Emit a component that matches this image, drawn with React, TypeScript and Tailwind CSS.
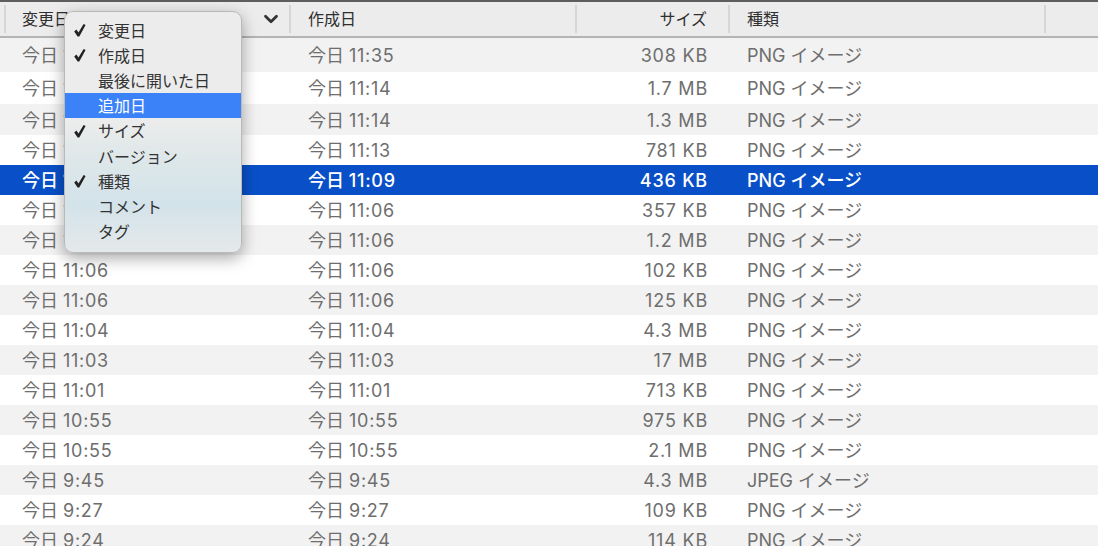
import { ChevronDown } from "lucide-react";

const font = "font-['Inter','Noto_Sans_CJK_JP',sans-serif]";

const rows = [
  ["11:35", "308 KB"],
  ["11:14", "1.7 MB"],
  ["11:14", "1.3 MB"],
  ["11:13", "781 KB"],
  ["11:09", "436 KB"],
  ["11:06", "357 KB"],
  ["11:06", "1.2 MB"],
  ["11:06", "102 KB"],
  ["11:06", "125 KB"],
  ["11:04", "4.3 MB"],
  ["11:03", "17 MB"],
  ["11:01", "713 KB"],
  ["10:55", "975 KB"],
  ["10:55", "2.1 MB"],
  ["9:45", "4.3 MB"],
  ["9:27", "109 KB"],
  ["9:24", "114 KB"],
].map(([time, size], i) => ({
  time,
  size,
  kind: i === 14 ? "JPEG イメージ" : "PNG イメージ",
}));

// the first few rows in the source are slightly taller than the rest
const rowHeights = ["h-[34px]", "h-[32px]", "h-[31px]", "h-[30px]"];

const menuItems = [
  { label: "変更日", checked: true },
  { label: "作成日", checked: true },
  { label: "最後に開いた日" },
  { label: "追加日", active: true },
  { label: "サイズ", checked: true },
  { label: "バージョン" },
  { label: "種類", checked: true },
  { label: "コメント" },
  { label: "タグ" },
];

function CheckMark() {
  return (
    <svg width="12" height="13" viewBox="0 0 12 13" className="text-[#222]">
      <path d="M0.2 7.6 L2.4 5.6 L4.5 8.4 L9.6 0 L11.6 0.9 L5.3 12.6 L3.6 12.6 Z" fill="currentColor" />
    </svg>
  );
}

function HeaderCell({ className, children }: { className: string; children?: React.ReactNode }) {
  return (
    <div className={`flex h-[28px] items-center border-r-2 border-[#d6d6d6] text-[16px] text-[#2f2f2f] ${className}`}>
      {children}
    </div>
  );
}

function ColumnMenu() {
  return (
    <div className="absolute left-[64px] top-[11px] w-[178px] overflow-hidden rounded-[9px] border border-[#b9b9b9] bg-[linear-gradient(180deg,#ececec_0%,#ececec_45%,#dde7e9_62%,#d3e3ea_80%,#e4e9ea_100%)] pt-[5.5px] pb-[7.5px] shadow-[0_5px_16px_rgba(0,0,0,0.35)]">
      {menuItems.map((item) => (
        <div
          key={item.label}
          className={`flex h-[25.2px] items-center pt-[1px] text-[16px] ${item.active ? "bg-[#3b82f9] text-white" : "text-[#333]"}`}
        >
          <span className="flex w-[33px] justify-end pr-[12px]">{item.checked && <CheckMark />}</span>
          {item.label}
        </div>
      ))}
    </div>
  );
}

export default function App() {
  return (
    <div className={`relative h-[546px] w-[1098px] overflow-hidden bg-white ${font}`}>
      <div className="flex h-[38px] items-center border-t-2 border-b-2 border-t-[#5e5e5e] border-b-[#b4b4b4] bg-[#ececec]">
        <HeaderCell className="ml-[4px] w-[287px] justify-between border-l-2 pl-[16px] pr-[7px]">
          変更日
          <ChevronDown size={22} strokeWidth={3} className="text-[#333]" />
        </HeaderCell>
        <HeaderCell className="w-[286px] pl-[17px]">作成日</HeaderCell>
        <HeaderCell className="w-[153px] justify-end pr-[21px]">サイズ</HeaderCell>
        <HeaderCell className="w-[316px] pl-[17px]">種類</HeaderCell>
      </div>

      {rows.map((row, i) => {
        const selected = i === 4;
        const stripe = i % 2 === 0 ? "bg-[#f2f2f2]" : "bg-white";
        const stamp = (
          <>
            今日 <span className="tracking-[0.7px]">{row.time}</span>
          </>
        );
        return (
          <div
            key={i}
            className={`flex items-center pt-[1px] text-[18px] ${rowHeights[i] ?? "h-[30px]"} ${
              selected ? "bg-[#0950c8] font-medium text-white" : `${stripe} text-[#6e6e6e]`
            }`}
          >
            <div className="w-[291px] pl-[22px]">{stamp}</div>
            <div className="w-[286px] pl-[17px]">{stamp}</div>
            <div className="w-[131px] text-right tracking-[0.8px]">{row.size}</div>
            <div className="pl-[39px]">{row.kind}</div>
          </div>
        );
      })}

      <ColumnMenu />
    </div>
  );
}
